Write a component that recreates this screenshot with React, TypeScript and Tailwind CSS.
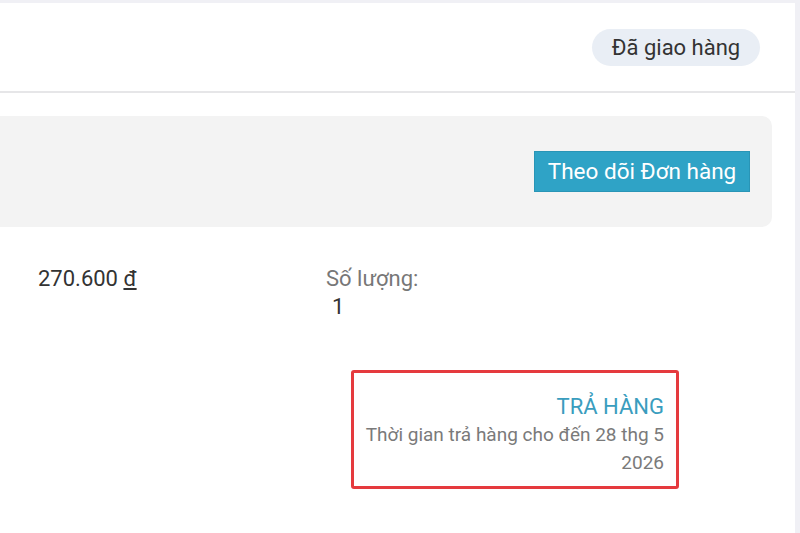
import React from "react";

const font = { fontFamily: "Roboto, 'Noto Sans', sans-serif" };

export default function App() {
  return (
    <div className="w-[800px] h-[533px] bg-[#f0f0f5] pt-[3px] pr-[5px] overflow-hidden" style={font}>
      <div className="h-full bg-white flex flex-col">
        {/* order header with status badge */}
        <div className="h-[90px] border-b-2 border-[#e6e6e8] flex items-center justify-end pr-[35px]">
          <span className="h-[37px] w-[168px] rounded-full bg-[#e9eef5] text-[#333333] text-[22px] flex items-center justify-center">
            Đã giao hàng
          </span>
        </div>

        {/* tracking panel */}
        <div className="mt-[23px] mr-[23px] h-[111px] bg-[#f3f3f3] rounded-r-[10px] flex items-center justify-end pr-[22px]">
          <button className="h-[41px] w-[216px] bg-[#2fa3c6] border border-[#2995b6] text-white text-[22.5px] flex items-center justify-center">
            Theo dõi Đơn hàng
          </button>
        </div>

        {/* item line */}
        <div className="mt-[38px] flex text-[22px] leading-[28px]">
          <div className="ml-[38px] w-[288px] text-[#333333]">
            270.600 <span className="underline underline-offset-2">đ</span>
          </div>
          <div className="text-[#777777]">
            <div>Số lượng:</div>
            <div className="pl-[6px] text-[#333333]">1</div>
          </div>
        </div>

        {/* return action */}
        <div className="mt-[49px] ml-[351px] w-[328px] h-[119px] border-[3px] border-[#e53a3e] rounded-[3px] flex flex-col items-end pt-[20px] pr-[12px] text-right">
          <div className="text-[22px] leading-[28px] text-[#3a9dbe]">TRẢ HÀNG</div>
          <div className="text-[19px] leading-[28px] text-[#7a7a7a] w-[304px]">
            Thời gian trả hàng cho đến 28 thg 5 2026
          </div>
        </div>
      </div>
    </div>
  );
}
